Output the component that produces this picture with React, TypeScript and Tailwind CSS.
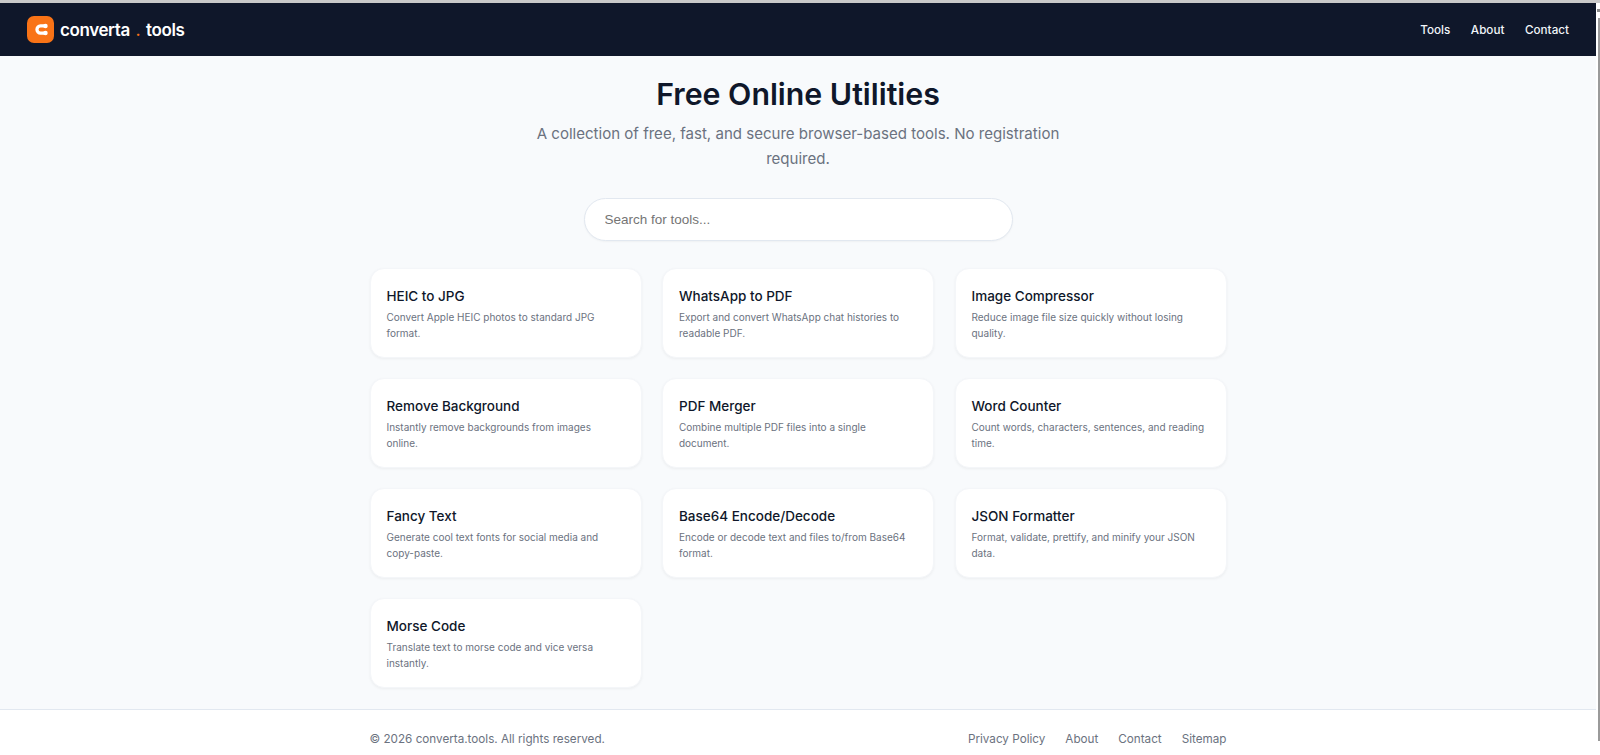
import React from 'react';

const tools = [
  { name: 'HEIC to JPG', desc: 'Convert Apple HEIC photos to standard JPG format.' },
  { name: 'WhatsApp to PDF', desc: 'Export and convert WhatsApp chat histories to readable PDF.' },
  { name: 'Image Compressor', desc: 'Reduce image file size quickly without losing quality.' },
  { name: 'Remove Background', desc: 'Instantly remove backgrounds from images online.' },
  { name: 'PDF Merger', desc: 'Combine multiple PDF files into a single document.' },
  { name: 'Word Counter', desc: 'Count words, characters, sentences, and reading time.' },
  { name: 'Fancy Text', desc: 'Generate cool text fonts for social media and copy-paste.' },
  { name: 'Base64 Encode/Decode', desc: 'Encode or decode text and files to/from Base64 format.' },
  { name: 'JSON Formatter', desc: 'Format, validate, prettify, and minify your JSON data.' },
  { name: 'Morse Code', desc: 'Translate text to morse code and vice versa instantly.' },
];

const App: React.FC = () => {
  return (
    <div className="flex h-[755px] flex-col overflow-hidden bg-white font-['Inter',sans-serif]">
      <div className="h-[3px] shrink-0 bg-[#c9c9c9]" />
      <div className="flex min-h-0 flex-1">
        <div className="flex min-w-0 flex-1 flex-col bg-[#f8fafc]">
          {/* Header */}
          <header className="flex h-[53px] shrink-0 items-center justify-between bg-[#0f172a] pl-[27px] pr-[27px] text-white">
            <div className="flex items-center gap-[6px]">
              <div className="flex h-[27px] w-[27px] items-center justify-center rounded-[7px] bg-[#f97316]">
                <svg width="17" height="17" viewBox="0 0 24 24" fill="white" stroke="white" strokeLinecap="round">
                  <path d="M18 7H12A5 5 0 0 0 12 17H18" fill="none" strokeWidth="4.6" />
                  <circle cx="19" cy="7" r="3.2" strokeWidth="0" />
                  <circle cx="19" cy="17" r="3.2" strokeWidth="0" />
                </svg>
              </div>
              <span className="pt-[2px] text-[17px] font-semibold leading-none tracking-[-0.4px]">
                converta
                <span className="mx-[6px] text-[14px] font-bold text-[#f97316]">.</span>
                tools
              </span>
            </div>
            <nav className="flex items-center gap-[20.5px] pt-[2px] text-[11.7px] font-medium text-[#f1f5f9]">
              <a>Tools</a>
              <a>About</a>
              <a>Contact</a>
            </nav>
          </header>

          <main className="flex flex-1 flex-col items-center">
            <h1 className="mt-[19px] text-[30.3px] font-semibold leading-[38px] text-[#0f172a]">Free Online Utilities</h1>
            <p className="mt-[9px] w-[530px] text-center text-[15.05px] leading-[24.5px] text-[#6b7280]">
              A collection of free, fast, and secure browser-based tools. No registration required.
            </p>
            <div className="mt-[27px] w-[429px]">
              <input
                placeholder="Search for tools..."
                className="h-[43px] w-full rounded-full border border-[#e2e8f0] bg-white px-5 pb-[1px] font-['Liberation_Sans',sans-serif] text-[13.5px] shadow-[0_1px_2px_rgba(0,0,0,0.04)] outline-none placeholder:text-[#757575]"
              />
            </div>

            {/* Tool grid */}
            <div className="mt-[27px] grid w-[857px] grid-cols-3 gap-x-[20.5px] gap-y-[20px]">
              {tools.map((tool) => (
                <div
                  key={tool.name}
                  className="h-[90px] rounded-[14px] border border-[#f4f6f9] bg-white px-4 pt-[17px] shadow-[0_1px_3px_rgba(0,0,0,0.05)]"
                >
                  <h3 className="text-[13.5px] font-medium leading-[20px] text-[#0f172a]">{tool.name}</h3>
                  <p className="mt-[4px] text-[10px] leading-[15.5px] text-[#6b7280]">{tool.desc}</p>
                </div>
              ))}
            </div>
          </main>

          {/* Footer */}
          <footer className="h-[46px] shrink-0 border-t border-[#e2e8f0] bg-white">
            <div className="mx-auto flex w-[857px] items-center justify-between pt-[20px] text-[11.7px] leading-[18px] text-[#6b7280]">
              <span>© 2026 converta.tools. All rights reserved.</span>
              <div className="flex gap-5">
                <a>Privacy Policy</a>
                <a>About</a>
                <a>Contact</a>
                <a>Sitemap</a>
              </div>
            </div>
          </footer>
        </div>

        {/* Window scrollbar */}
        <div className="flex w-[4px] shrink-0 flex-col items-end bg-white pt-[6px] pb-[14px]">
          <div className="mb-[6px] h-[3px] w-[3px] bg-[#8a8a8a]" />
          <div className="min-h-0 w-[2px] flex-1 bg-[#9a9a9a]" />
        </div>
      </div>
    </div>
  );
};

export default App;
